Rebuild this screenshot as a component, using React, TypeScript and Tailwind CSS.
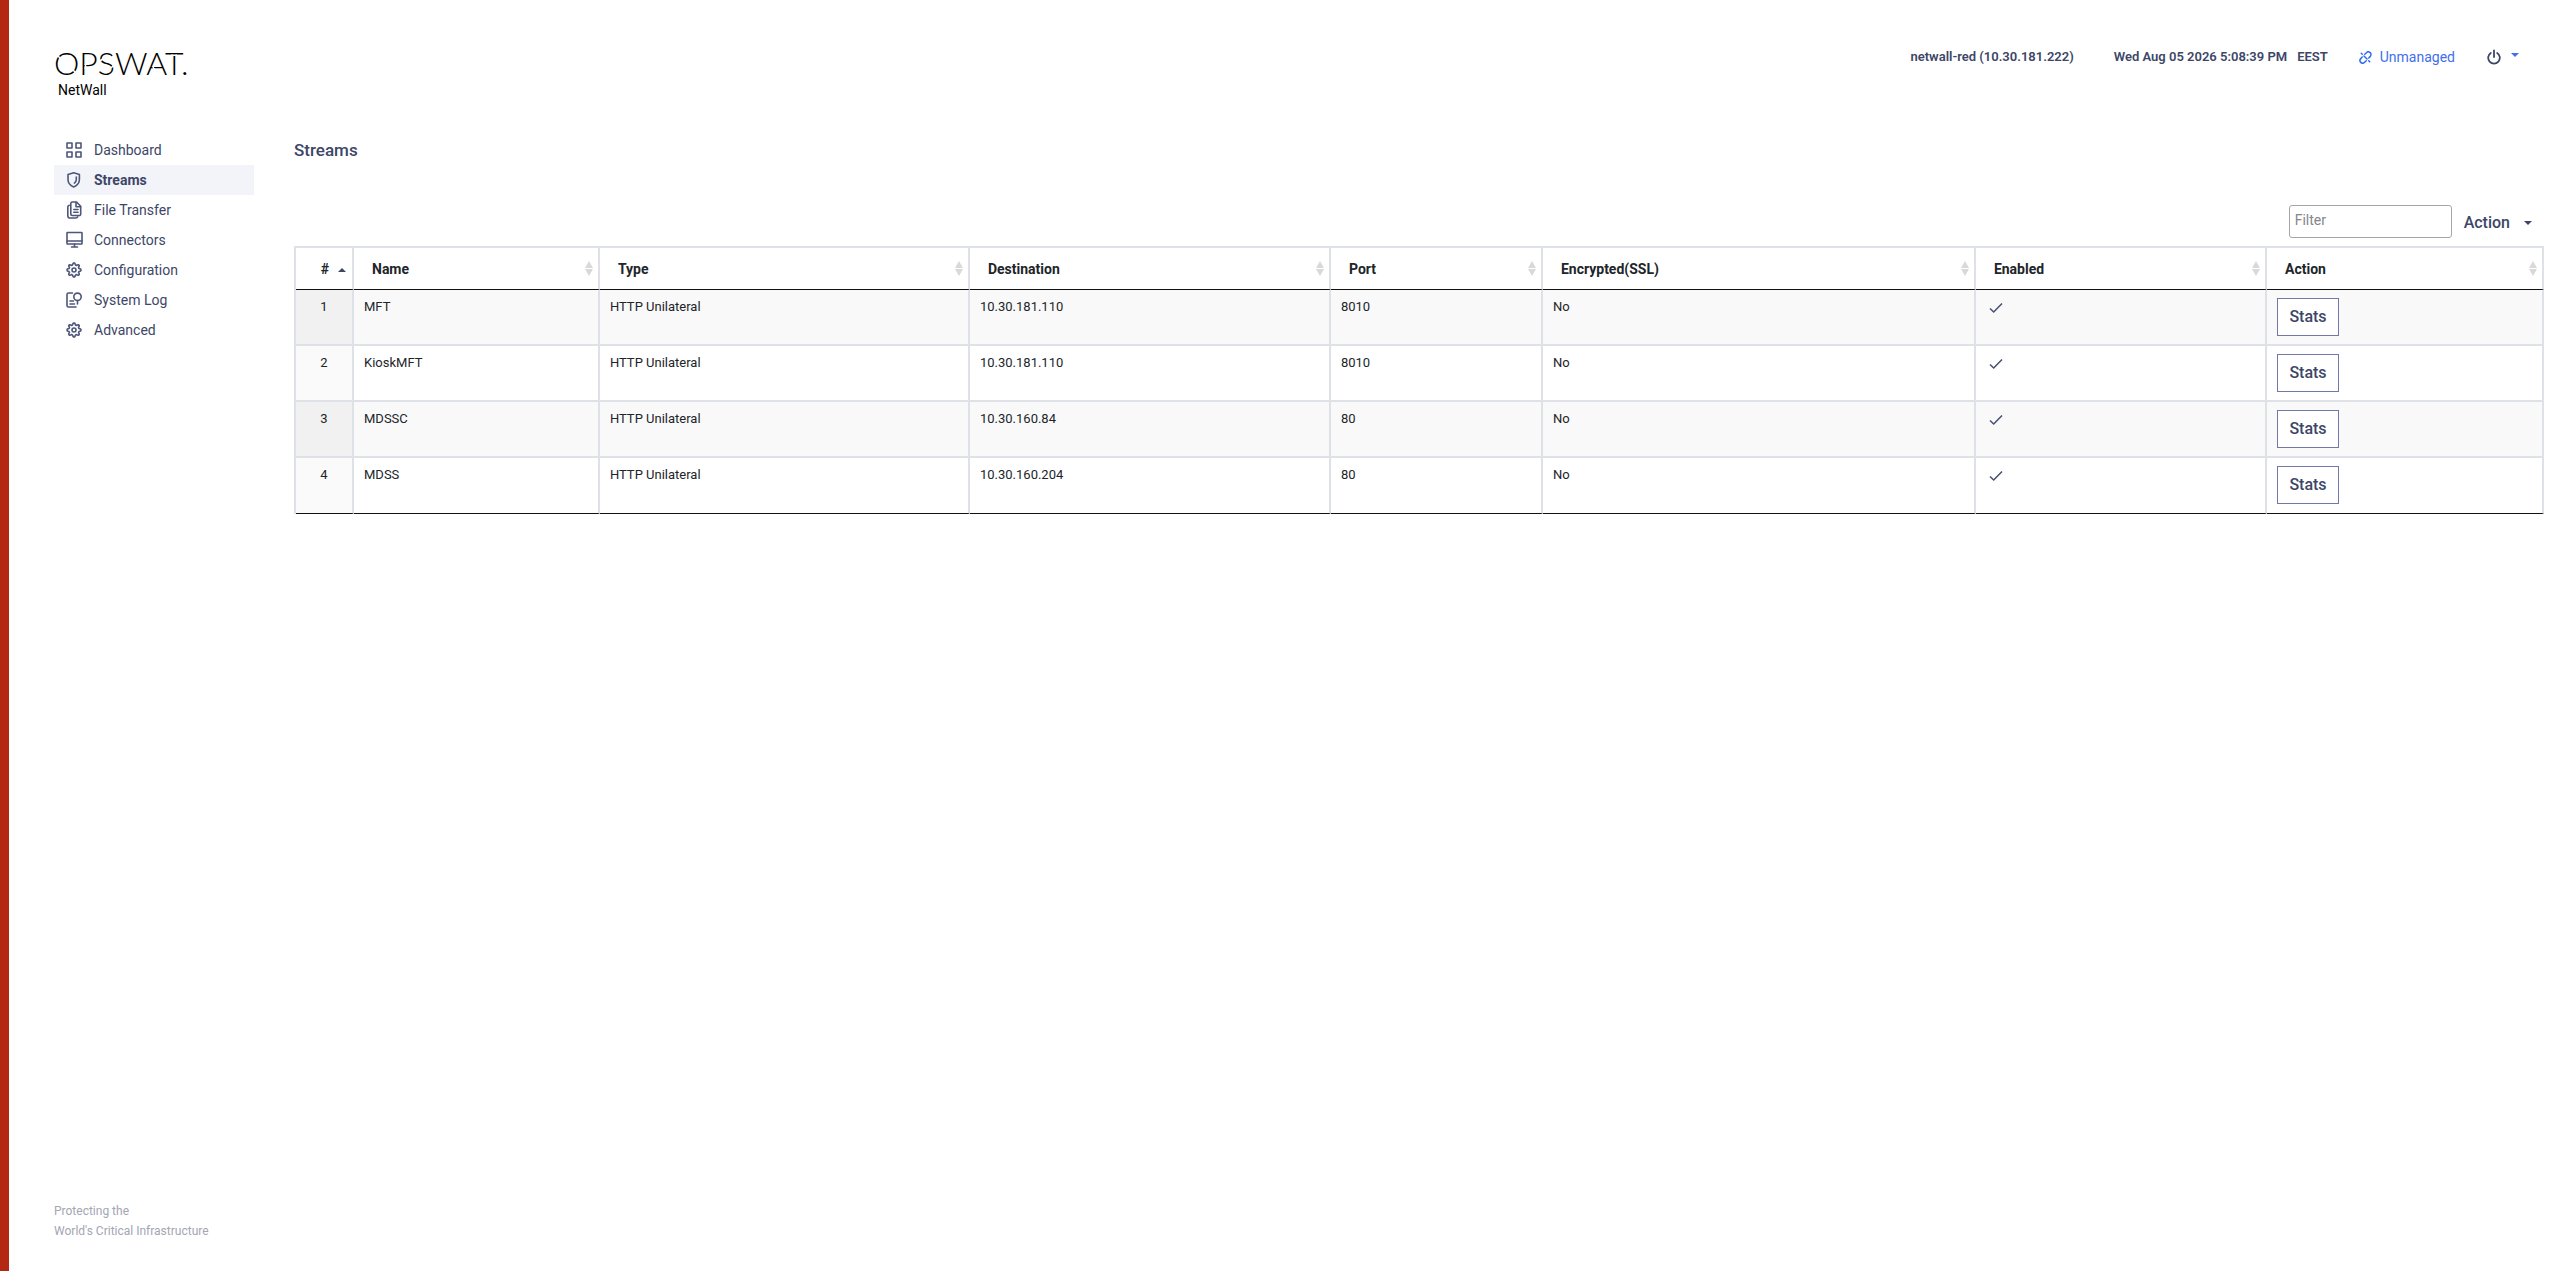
import React from "react";

const nav = [
  { label: "Dashboard", icon: "grid" },
  { label: "Streams", icon: "shield", active: true },
  { label: "File Transfer", icon: "files" },
  { label: "Connectors", icon: "monitor" },
  { label: "Configuration", icon: "gear" },
  { label: "System Log", icon: "log" },
  { label: "Advanced", icon: "gear" },
];

const gearPath = (() => {
  const pts: string[] = [];
  const n = 64;
  for (let i = 0; i < n; i++) {
    const a = (i / n) * Math.PI * 2;
    const w = Math.tanh(3 * Math.cos(a * 8));
    const r = 6 + w * 0.9;
    pts.push(`${(8 + r * Math.cos(a)).toFixed(2)} ${(9 + r * Math.sin(a)).toFixed(2)}`);
  }
  return `M${pts.join("L")}Z`;
})();

function NavIcon({ name }: { name: string }) {
  return (
    <svg
      aria-hidden="true"
      viewBox="0 0 18 18"
      className="h-[18px] w-[18px] shrink-0"
      fill="none"
      stroke="#4e567a"
      strokeWidth="1.6"
      strokeLinejoin="round"
      strokeLinecap="round"
    >
      {name === "grid" && (
        <>
          <rect x="1" y="2" width="5" height="5" />
          <rect x="10" y="2" width="5" height="5" />
          <rect x="1" y="11" width="5" height="5" />
          <rect x="10" y="11" width="5" height="5" />
        </>
      )}
      {name === "shield" && (
        <>
          <path d="M7.700 1.800 13.400 3.600V8.500c0 3.600-2.400 6.100-5.700 7.500C4.400 14.600 2 12.100 2 8.500V3.600Z" />
          <path d="M10.300 6v2.500c0 1.500-.700 2.700-1.900 3.600" />
        </>
      )}
      {name === "files" && (
        <>
          <path d="M6.300 1h4.200l4.200 4.200v8a1.300 1.300 0 0 1-1.300 1.300H6.300A1.500 1.500 0 0 1 4.800 13V2.500A1.500 1.500 0 0 1 6.300 1Z" />
          <path d="M10 1.200v4.500h4.500M7.800 8.500H12M7.800 11.200H12" />
          <path d="M3.200 4.200C2.300 4.500 1.800 5.100 1.800 6v8.700a2.300 2.300 0 0 0 2.300 2.300h5.600c1 0 1.700-.400 2-1.200" />
        </>
      )}
      {name === "monitor" && (
        <>
          <rect x="1" y="1.500" width="15" height="11.500" rx="0.500" />
          <path d="M1 10h15M8.500 13v3M5.500 16h6" />
        </>
      )}
      {name === "gear" && (
        <>
          <path d={gearPath} />
          <circle cx="8" cy="9" r="2" />
        </>
      )}
      {name === "log" && (
        <>
          <path d="M6.500 2H2.500A1.500 1.500 0 0 0 1 3.500v11A1.500 1.500 0 0 0 2.500 16H10" />
          <circle cx="11.500" cy="5.800" r="3.700" />
          <path d="M11.500 9.500V13M4 10h3.500M4 13h4.500" />
        </>
      )}
    </svg>
  );
}

function Logo() {
  return (
    <div className="relative w-fit">
      <span className="block font-['Lato',sans-serif] text-[32px] leading-8 font-light text-black">OPSWAT.</span>
      {/* Stencil cuts across the wordmark */}
      <svg aria-hidden="true" viewBox="0 0 140 32" className="absolute top-0 left-0 h-8 w-[140px]" fill="none" stroke="#fff" strokeWidth="1.6">
        <path d="M3 8l4 4M18.500 22.500l4 4M31.500 17v5M50 11l-4 3M60 18l-3 3M117 8.200h6M99 20l2 4" />
      </svg>
    </div>
  );
}

const columns = [
  { label: "#", width: "w-[58px]" },
  { label: "Name", width: "w-[10.94%]" },
  { label: "Type", width: "w-[16.46%]" },
  { label: "Destination", width: "w-[16.06%]" },
  { label: "Port", width: "w-[9.43%]" },
  { label: "Encrypted(SSL)", width: "w-[19.26%]" },
  { label: "Enabled", width: "w-[12.95%]" },
  { label: "Action", width: "" },
];

const rows = [
  ["MFT", "HTTP Unilateral", "10.30.181.110", "8010", "No"],
  ["KioskMFT", "HTTP Unilateral", "10.30.181.110", "8010", "No"],
  ["MDSSC", "HTTP Unilateral", "10.30.160.84", "80", "No"],
  ["MDSS", "HTTP Unilateral", "10.30.160.204", "80", "No"],
];

export default function App() {
  return (
    <div className="flex min-h-screen border-l-[9px] border-[#b42813] bg-white font-['Roboto',sans-serif] text-sm text-[#3d4667]">
      <aside className="ml-[45px] flex w-[200px] shrink-0 flex-col pt-[47px]">
        <Logo />
        <div className="pl-1 leading-[22px] text-black">NetWall</div>
        <nav className="mt-[34px] flex flex-col">
          {nav.map((n) => (
            <a
              key={n.label}
              href="#"
              className={
                n.active
                  ? "flex h-[30px] items-center gap-[10px] bg-[#f3f4f9] pl-3 font-bold"
                  : "flex h-[30px] items-center gap-[10px] pl-3"
              }
            >
              <NavIcon name={n.icon} />
              {n.label}
            </a>
          ))}
        </nav>
        <footer className="mt-auto pb-[30px] text-xs leading-5 text-[#a3a6b3]">
          Protecting the
          <br />
          World's Critical Infrastructure
        </footer>
      </aside>

      <div className="mr-[13px] ml-10 flex min-w-0 flex-1 flex-col">
        <header className="flex h-[114px] items-center justify-end pr-[25px] text-[13px] font-semibold">
          <span>netwall-red (10.30.181.222)</span>
          <span className="ml-10">Wed Aug 05 2026 5:08:39 PM</span>
          <span className="ml-[10px]">EEST</span>
          <a href="#" className="ml-[31px] flex items-center gap-2 text-sm font-normal text-[#3f6fee]">
            <svg aria-hidden="true" viewBox="0 0 14 14" className="h-[13px] w-[13px]" fill="none" stroke="#2d6bf2" strokeWidth="1.600" strokeLinecap="round">
              <path d="M6.200 3.500 8 1.800a2.800 2.800 0 0 1 4.100 4L10.500 7.500M7.800 10.500 6 12.200a2.800 2.800 0 0 1-4.100-4L3.500 6.500M5.300 5.300l3.400 3.400M2.500 2.500l1 1M10.500 10.500l1 1" />
            </svg>
            Unmanaged
          </a>
          <button type="button" aria-label="Power" className="ml-8 flex items-center gap-[10px]">
            <svg aria-hidden="true" viewBox="0 0 16 16" className="h-4 w-[14px]" fill="none" stroke="#3d4667" strokeWidth="1.800" strokeLinecap="round" preserveAspectRatio="xMidYMid slice">
              <path d="M8 1.500V8M4.800 3.900a5.800 5.800 0 1 0 6.400 0" />
            </svg>
            <svg aria-hidden="true" viewBox="0 0 8 4" className="mb-1 h-1 w-2" fill="#3f6fee">
              <path d="M0 0h8L4 4Z" />
            </svg>
          </button>
        </header>

        <main>
          <h1 className="mt-6 h-[67px] text-[17px] leading-6 font-medium">Streams</h1>
          <div className="flex items-center justify-end gap-3 pr-3 pb-2">
            <input
              type="text"
              aria-label="Filter"
              placeholder="Filter"
              className="h-[33px] w-[163px] rounded-[3px] border border-[#a6a6a6] px-[5px] pb-[3px] outline-none placeholder:text-[#85868c]"
            />
            <button type="button" className="flex items-center gap-[14px] pt-[2px] text-base font-medium">
              Action
              <svg aria-hidden="true" viewBox="0 0 8 4" className="h-1 w-2" fill="#3d4667">
                <path d="M0 0h8L4 4Z" />
              </svg>
            </button>
          </div>

          <table className="w-full table-fixed border-separate border-spacing-0 border-t-2 border-l-2 border-[#dee2e6] text-[#212529]">
            <thead>
              <tr className="h-[42px]">
                {columns.map((c, i) => (
                  <th key={c.label} scope="col" className={`${c.width} border-r-2 border-b border-r-[#dee2e6] border-b-[#111] p-0 font-bold`}>
                    <div className={i === 0 ? "flex items-center justify-end gap-[9px] pr-[6px]" : "flex items-center justify-between pr-[5px] pl-[18px]"}>
                      {c.label}
                      {i === 0 ? (
                        <svg aria-hidden="true" viewBox="0 0 8 4" className="mt-[2px] h-1 w-2" fill="#3d4667">
                          <path d="M0 4h8L4 0Z" />
                        </svg>
                      ) : (
                        <svg aria-hidden="true" viewBox="0 0 8 15" className="h-[15px] w-2" fill="#d9d9d9">
                          <path d="M0 7h8L4 0ZM0 8h8L4 15Z" />
                        </svg>
                      )}
                    </div>
                  </th>
                ))}
              </tr>
            </thead>
            <tbody className="text-[13px] [&>tr:last-child>td]:border-b [&>tr:last-child>td]:border-b-[#111]">
              {rows.map((r, i) => (
                <tr key={i} className="h-14 odd:bg-[#f9f9f9] [&>td]:border-r-2 [&>td]:border-b-2 [&>td]:border-[#dee2e6] [&>td]:align-top">
                  <td className={i % 2 === 0 ? "bg-[#f1f1f1] pt-2 text-center" : "bg-[#fafafa] pt-2 text-center"}>{i + 1}</td>
                  {r.map((v, j) => (
                    <td key={j} className="px-[10px] pt-2">{v}</td>
                  ))}
                  <td className="px-3 pt-2">
                    <svg role="img" aria-label="Enabled" viewBox="0 0 16 20" className="h-5 w-4" fill="none" stroke="#474f70" strokeWidth="1.500">
                      <path d="M2 10.500 5.700 14 14 5.500" />
                    </svg>
                  </td>
                  <td className="px-[10px] pt-2">
                    <button type="button" className="block h-[38px] w-[62px] border border-[#7079a8] bg-white text-base font-medium text-[#3d4667]">Stats</button>
                  </td>
                </tr>
              ))}
            </tbody>
          </table>
        </main>
      </div>
    </div>
  );
}
